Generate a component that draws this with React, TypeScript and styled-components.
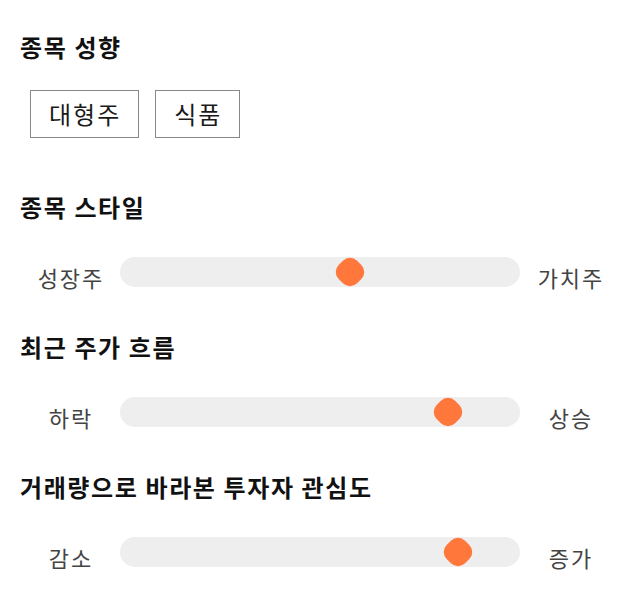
import React from "react";
import styled, { createGlobalStyle } from "styled-components";

const GlobalStyle = createGlobalStyle`
  body {
    margin: 0;
    background: #fff;
    font-family: "Noto Sans CJK KR", "Noto Sans", sans-serif;
  }
`;

const Page = styled.div`
  width: 640px;
  box-sizing: border-box;
  padding: 32px 20px 0;
  display: flex;
  flex-direction: column;
  gap: 40px;
`;

const Section = styled.section`
  display: flex;
  flex-direction: column;
`;

const Title = styled.h2`
  margin: 0;
  font-size: 24px;
  line-height: 30px;
  font-weight: 700;
  letter-spacing: 1.6px;
  color: #111;
`;

const TagList = styled.div`
  display: flex;
  gap: 16px;
  margin: 28px 0 14px 10px;
`;

const Tag = styled.span`
  padding: 6px 17px 6px 18px;
  border: 1px solid #888;
  font-size: 24px;
  line-height: 34px;
  letter-spacing: 2px;
  color: #1a1a1a;
`;

const SliderRow = styled.div`
  display: grid;
  grid-template-columns: 100px 1fr 100px;
  align-items: center;
  height: 40px;
  margin-top: 30px;
`;

const SideLabel = styled.span`
  text-align: center;
  font-size: 22px;
  line-height: 30px;
  letter-spacing: 2px;
  padding: 10px 0 0 2px;
  color: #444;
`;

const Track = styled.div`
  position: relative;
  height: 30px;
  border-radius: 15px;
  background: #eee;
`;

// rounded square turned on its corner
const Thumb = styled.div`
  position: absolute;
  top: 50%;
  width: 26px;
  height: 26px;
  border-radius: 10px;
  background: #ff773a;
  transform: translate(-50%, -50%) rotate(45deg);
`;

type SliderProps = {
  left: string;
  right: string;
  value: number;
};

function Slider({ left, right, value }: SliderProps) {
  return (
    <SliderRow>
      <SideLabel>{left}</SideLabel>
      <Track>
        <Thumb style={{ left: `${value}%` }} />
      </Track>
      <SideLabel>{right}</SideLabel>
    </SliderRow>
  );
}

const sliders = [
  { title: "종목 스타일", left: "성장주", right: "가치주", value: 57.5 },
  { title: "최근 주가 흐름", left: "하락", right: "상승", value: 82.1 },
  { title: "거래량으로 바라본 투자자 관심도", left: "감소", right: "증가", value: 84.6 },
];

export default function App() {
  return (
    <>
      <GlobalStyle />
      <Page>
        <Section>
          <Title>종목 성향</Title>
          <TagList>
            <Tag>대형주</Tag>
            <Tag>식품</Tag>
          </TagList>
        </Section>
        {sliders.map((s) => (
          <Section key={s.title}>
            <Title>{s.title}</Title>
            <Slider left={s.left} right={s.right} value={s.value} />
          </Section>
        ))}
      </Page>
    </>
  );
}
